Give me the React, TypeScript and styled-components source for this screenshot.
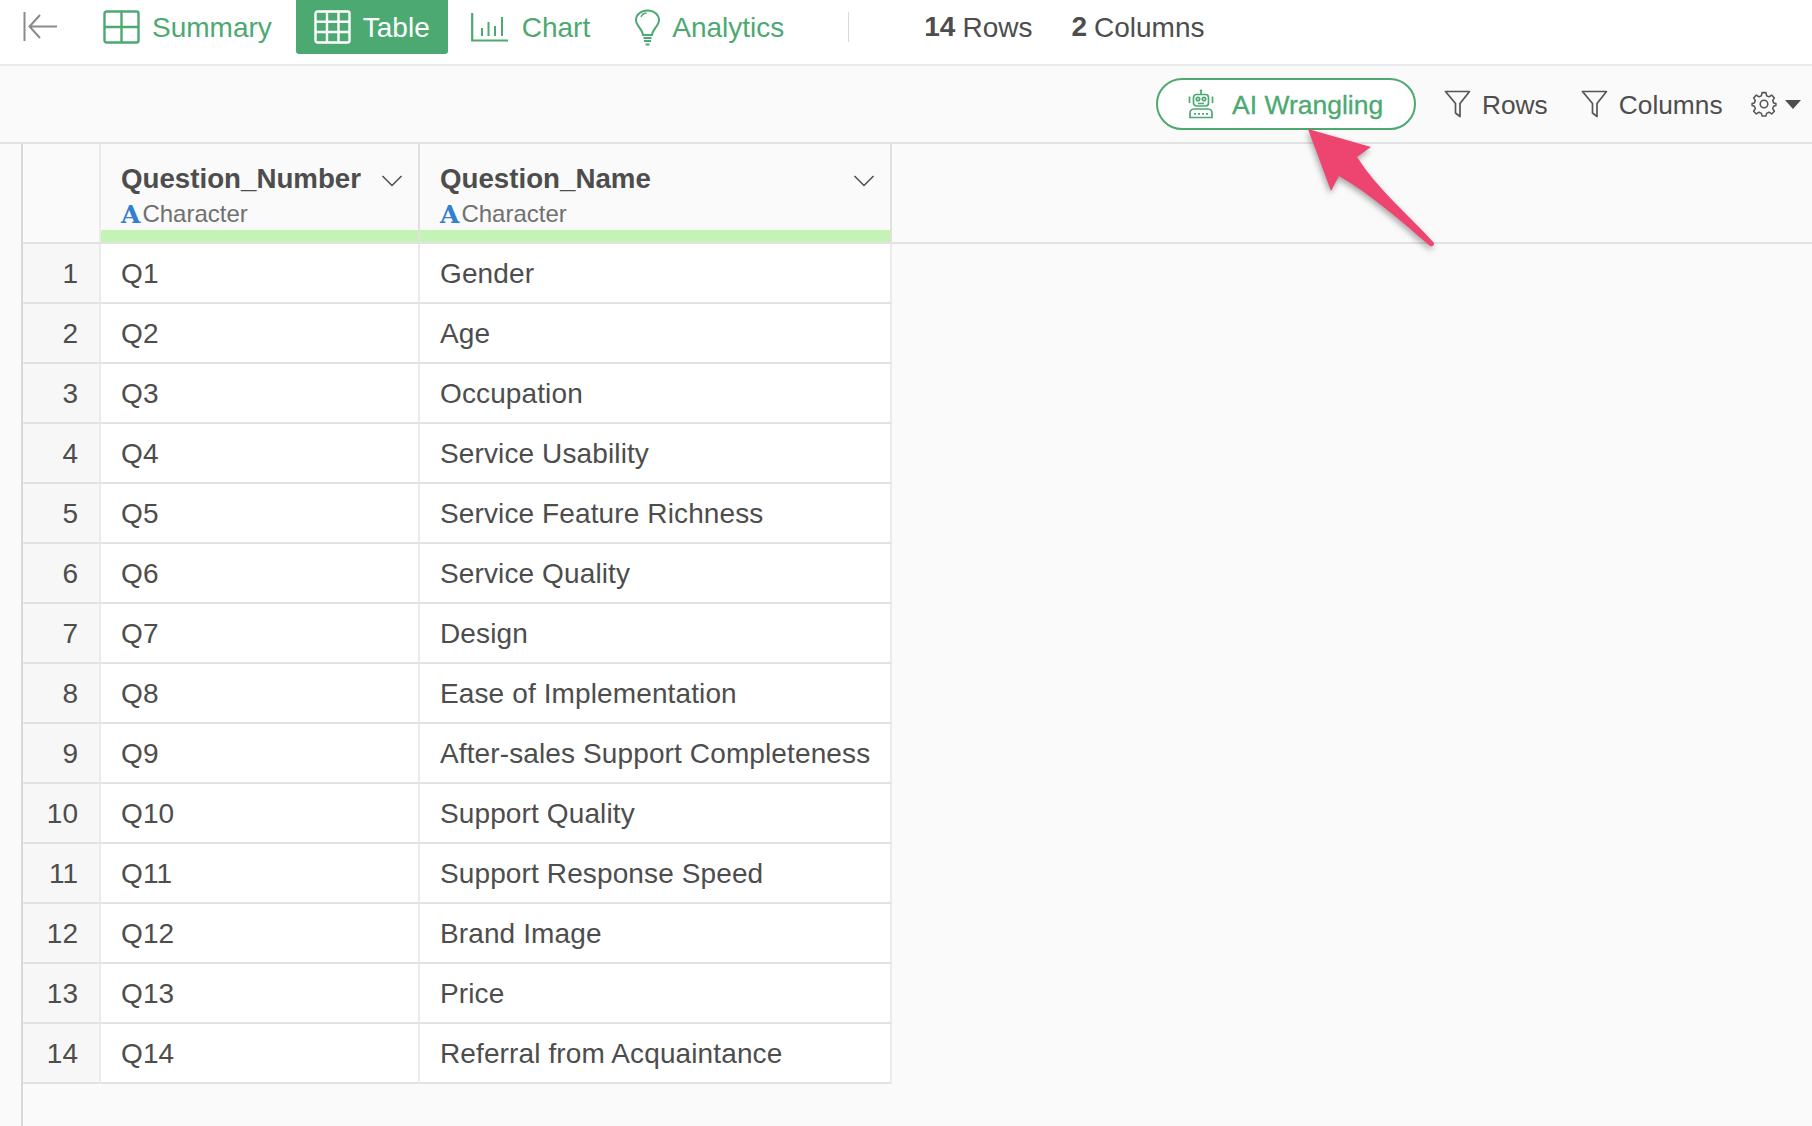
import React from "react";
import styled, { createGlobalStyle } from "styled-components";

const GREEN = "#4ca971";
const TEXT = "#4d4d4d";
const LINE = "#e2e2e2";

const Global = createGlobalStyle`
  html, body { margin: 0; padding: 0; background: #fafafa; }
  body { font-family: "Liberation Sans", Arial, sans-serif; color: ${TEXT}; overflow: hidden; }
  * { box-sizing: border-box; }
`;

const Page = styled.div`
  position: relative;
  width: 1812px;
  height: 1126px;
  overflow: hidden;
  background: #fafafa;
`;

const Header = styled.header`
  display: flex;
  align-items: flex-start;
  height: 66px;
  background: #fff;
  border-bottom: 2px solid #ebebeb;
`;

const BackButton = styled.button`
  width: 81px;
  height: 53px;
  padding: 0 0 0 23px;
  display: flex;
  align-items: center;
  border: 0;
  background: none;
`;

const Tab = styled.div<{ $active?: boolean; $left: number; $right: number; $gap: number }>`
  height: 54px;
  display: flex;
  align-items: center;
  gap: ${(p) => p.$gap}px;
  padding: 0 ${(p) => p.$right}px 0 ${(p) => p.$left}px;
  font-size: 28px;
  color: ${(p) => (p.$active ? "#fff" : GREEN)};
  background: ${(p) => (p.$active ? GREEN : "transparent")};
  border-radius: 0 0 3px 3px;
`;

const Label = styled.span`
  padding-top: 2px;
`;

const Divider = styled.div`
  width: 1px;
  height: 30px;
  margin: 12px 75px 0 64px;
  background: #d8d8d8;
`;

const Stat = styled.div`
  height: 53px;
  display: flex;
  align-items: center;
  margin-right: 39px;
  font-size: 28px;
  color: ${TEXT};
  b { margin-right: 7px; }
`;

const Toolbar = styled.div`
  height: 78px;
  padding: 12px 0 0 1156px;
  display: flex;
  align-items: flex-start;
  border-bottom: 2px solid ${LINE};
`;

const Pill = styled.div`
  width: 260px;
  height: 52px;
  display: flex;
  align-items: center;
  gap: 18px;
  padding-left: 30px;
  border: 2px solid ${GREEN};
  border-radius: 26px;
  background: #fff;
  color: ${GREEN};
  font-size: 26.5px;
  -webkit-text-stroke: 0.3px ${GREEN};
`;

const ToolItem = styled.div<{ $left: number; $gap: number }>`
  height: 52px;
  margin-left: ${(p) => p.$left}px;
  display: flex;
  align-items: center;
  gap: ${(p) => p.$gap}px;
  font-size: 26.3px;
  color: ${TEXT};
`;

const Caret = styled.span`
  width: 0;
  height: 0;
  border-left: 8px solid transparent;
  border-right: 8px solid transparent;
  border-top: 9px solid ${TEXT};
`;

const TableArea = styled.div`
  margin-left: 21px;
  height: 982px;
  border-left: 2px solid #d9d9d9;
`;

const HeadRow = styled.div`
  display: flex;
  height: 100px;
  border-bottom: 2px solid ${LINE};
`;

const Corner = styled.div`
  width: 78px;
  border-right: 2px solid #ebebeb;
`;

const HeadCell = styled.div<{ $w: number }>`
  width: ${(p) => p.$w}px;
  display: flex;
  flex-direction: column;
  border-right: 2px solid #e0e0e0;
`;

const HeadBody = styled.div`
  flex: 1;
  padding: 20px 0 0 20px;
`;

const HeadTitle = styled.div`
  display: flex;
  justify-content: space-between;
  align-items: center;
  height: 30px;
  font-size: 27.7px;
  font-weight: 700;
  color: ${TEXT};
  padding-right: 15px;
`;

const TitleChevron = styled.span`
  display: block;
  margin-top: 3px;
`;

const TypeLine = styled.div`
  display: flex;
  align-items: center;
  height: 26px;
  margin-top: 7px;
  font-size: 24px;
  color: #707070;
`;

const TypeA = styled.span`
  font-family: "DejaVu Serif", "Liberation Serif", serif;
  font-weight: 700;
  font-size: 25px;
  color: #3380cc;
  margin-right: 2px;
  line-height: 1;
`;

const GreenBar = styled.div`
  height: 12px;
  background: #c3f4b6;
`;

const Body = styled.div`
  display: grid;
  grid-template-columns: 78px 319px 472px;
  grid-auto-rows: 60px;
  width: 869px;
`;

const IndexCell = styled.div`
  border-bottom: 2px solid ${LINE};
  border-right: 2px solid #ebebeb;
  background: #f7f7f7;
  display: flex;
  align-items: center;
  justify-content: flex-end;
  padding: 2px 21px 0 0;
  font-size: 28px;
  color: ${TEXT};
`;

const Cell = styled.div`
  border-bottom: 2px solid ${LINE};
  border-right: 2px solid #ebebeb;
  background: #fff;
  display: flex;
  align-items: center;
  padding: 2px 0 0 20px;
  font-size: 28px;
  letter-spacing: 0.12px;
  color: ${TEXT};
  white-space: nowrap;
`;

const ArrowOverlay = styled.svg`
  position: absolute;
  left: 1295px;
  top: 120px;
  filter: drop-shadow(-1px 3px 3px rgba(0, 0, 0, 0.35));
`;

const rows = [
  "Gender",
  "Age",
  "Occupation",
  "Service Usability",
  "Service Feature Richness",
  "Service Quality",
  "Design",
  "Ease of Implementation",
  "After-sales Support Completeness",
  "Support Quality",
  "Support Response Speed",
  "Brand Image",
  "Price",
  "Referral from Acquaintance",
];

const Ico = ({ w, h, vb, color, sw = 2, children }: { w: number; h: number; vb?: string; color: string; sw?: number; children: React.ReactNode }) => (
  <svg width={w} height={h} viewBox={vb ?? `0 0 ${w} ${h}`} fill="none" stroke={color} strokeWidth={sw} style={{ flex: "none", display: "block" }}>
    {children}
  </svg>
);

const Chevron = () => (
  <TitleChevron>
    <Ico w={22} h={12} color="#4a4a4a" sw={1.5}>
      <path d="M1.5 1 L11 10.5 L20.5 1" />
    </Ico>
  </TitleChevron>
);

const Funnel = () => (
  <Ico w={27} h={28} color="#555" sw={1.7}>
    <path d="M1.5 1.5 H25.5 L16 13.5 V26.5 L11.5 23 V13.5 Z" strokeLinejoin="round" />
  </Ico>
);

const SummaryIcon = () => (
  <Ico w={37} h={34} color={GREEN} sw={2.4}>
    <rect x="1.5" y="1.5" width="34" height="31" rx="2" />
    <path d="M18.5 1.5 V32.5 M1.5 17 H35.5" />
  </Ico>
);

const TableIcon = () => (
  <Ico w={37} h={34} color="#fff" sw={2.4}>
    <rect x="1.5" y="1.5" width="34" height="31" rx="2" />
    <path d="M13 1.5 V32.5 M24.5 1.5 V32.5 M1.5 11.7 H35.5 M1.5 22 H35.5" />
  </Ico>
);

const ChartIcon = () => (
  <Ico w={37} h={29} color={GREEN} sw={2}>
    <path d="M1.2 0 V27.5 H37" strokeWidth={2.2} />
    <path d="M11 15 V23 M17.5 9 V23 M24 13 V23 M31 4 V23" />
  </Ico>
);

const BulbIcon = () => (
  <Ico w={27} h={37} color={GREEN} sw={2}>
    <path d="M9 26 C8.5 20 2 17 2 11 C2 5.5 7 1.5 13.5 1.5 C20 1.5 25 5.5 25 11 C25 17 18.5 20 18 26 Z" />
    <path d="M7 8 C8 5.5 10 4 12.5 4" strokeWidth={1.4} />
    <path d="M9.5 29 H17.5 M10 32 H17 M11.5 35.5 H15.5" strokeWidth={2.2} />
  </Ico>
);

const RobotIcon = () => (
  <Ico w={26} h={30} color={GREEN} sw={1.7}>
    <circle cx="13" cy="1.8" r="1.3" fill={GREEN} stroke="none" />
    <path d="M13 3 V5" />
    <rect x="5.5" y="5.5" width="15" height="11.5" rx="3" />
    <circle cx="10" cy="10" r="1.7" />
    <circle cx="16" cy="10" r="1.7" />
    <path d="M10 14.5 H16 M11 13.5 V15.5 M13 13.5 V15.5 M15 13.5 V15.5" strokeWidth={1.2} />
    <path d="M1.5 7.5 V14 M24.5 7.5 V14" />
    <path d="M6 20 H20 A4.2 4.2 0 0 1 24 24 V28.5 H2 V24 A4.2 4.2 0 0 1 6 20 Z" />
    <path d="M6 24.8 H20" strokeWidth={1.8} strokeDasharray="2 2" />
  </Ico>
);

const GearIcon = () => (
  <Ico w={26} h={26} vb="0 0 24 24" color="#555" sw={1.4}>
    <circle cx="12" cy="12" r="3.5" />
    <path d="M10.2 1.5 H13.8 L14.4 4.4 L16.6 5.4 L19.1 3.8 L21.6 6.4 L20 8.9 L20.9 11 L23 11.6 V13.4 L20.9 14 L20 16.2 L21.6 18.7 L19.1 21.2 L16.6 19.6 L14.4 20.6 L13.8 23 H10.2 L9.6 20.6 L7.4 19.6 L4.9 21.2 L2.4 18.7 L4 16.2 L3.1 14 L1 13.4 V11.6 L3.1 11 L4 8.9 L2.4 6.4 L4.9 3.8 L7.4 5.4 L9.6 4.4 Z" strokeLinejoin="round" />
  </Ico>
);

const TopBar = () => (
  <Header>
    <BackButton aria-label="back">
      <Ico w={35} h={31} color="#8a8a8a" sw={2}>
        <path d="M1.5 1 V30" />
        <path d="M34 15.5 H7 M17 4 L6.5 15.5 L17 27" />
      </Ico>
    </BackButton>
    <Tab $left={22} $right={24} $gap={12}><SummaryIcon /><Label>Summary</Label></Tab>
    <Tab $active $left={18} $right={18} $gap={12}><TableIcon /><Label>Table</Label></Tab>
    <Tab $left={23} $right={24} $gap={14}><ChartIcon /><Label>Chart</Label></Tab>
    <Tab $left={20} $right={0} $gap={11}><BulbIcon /><Label>Analytics</Label></Tab>
    <Divider />
    <Stat><b>14</b><Label>Rows</Label></Stat>
    <Stat><b>2</b><Label>Columns</Label></Stat>
  </Header>
);

const Head = ({ title, w }: { title: string; w: number }) => (
  <HeadCell $w={w}>
    <HeadBody>
      <HeadTitle>{title}<Chevron /></HeadTitle>
      <TypeLine><TypeA>A</TypeA>Character</TypeLine>
    </HeadBody>
    <GreenBar />
  </HeadCell>
);

export default function App() {
  return (
    <Page>
      <Global />
      <TopBar />
      <Toolbar>
        <Pill><RobotIcon /><Label>AI Wrangling</Label></Pill>
        <ToolItem $left={28} $gap={11}><Funnel /><Label>Rows</Label></ToolItem>
        <ToolItem $left={33} $gap={11}><Funnel /><Label>Columns</Label></ToolItem>
        <ToolItem $left={28} $gap={8}><GearIcon /><Caret /></ToolItem>
      </Toolbar>
      <TableArea>
        <HeadRow>
          <Corner />
          <Head title="Question_Number" w={319} />
          <Head title="Question_Name" w={472} />
        </HeadRow>
        <Body>
          {rows.map((name, i) => (
            <React.Fragment key={name}>
              <IndexCell>{i + 1}</IndexCell>
              <Cell>Q{i + 1}</Cell>
              <Cell>{name}</Cell>
            </React.Fragment>
          ))}
        </Body>
      </TableArea>
      <ArrowOverlay width={150} height={135} viewBox="1295 120 150 135">
        <path d="M1308 129 L1371 147 L1357 157 C1378 190 1408 214 1434 243 Q1434 247 1430 246 C1402 222 1372 195 1339 176 L1331 191 Z" fill="#ee4470" />
      </ArrowOverlay>
    </Page>
  );
}
